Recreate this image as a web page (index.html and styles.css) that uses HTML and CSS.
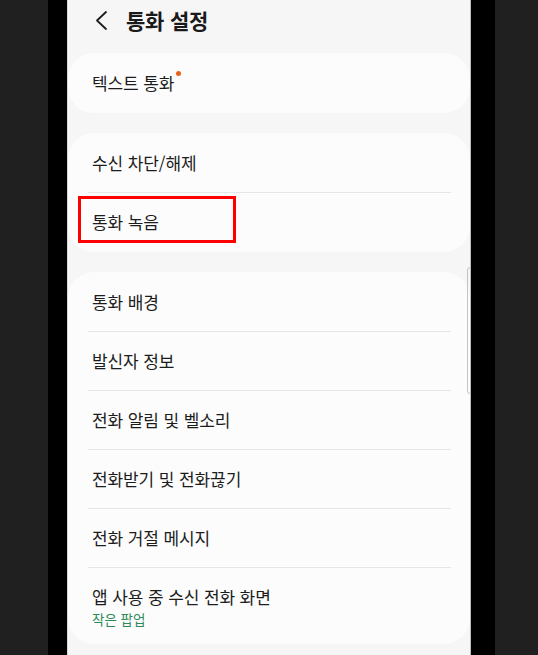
FILE: index.html
```html
<!DOCTYPE html>
<html lang="ko">
<head>
<meta charset="utf-8">
<title>통화 설정</title>
<link rel="stylesheet" href="styles.css">
</head>
<body>
<div class="frame">
  <div class="side side-left"></div>
  <div class="bezel bezel-left"></div>
  <div class="screen">
    <header class="header">
      <svg class="back" width="14" height="22" viewBox="0 0 14 22" aria-hidden="true">
        <polyline points="11,2 2,10.5 11,19" fill="none" stroke="#1c1c1c" stroke-width="1.8" stroke-linecap="round" stroke-linejoin="round"/>
      </svg>
      <h1 class="title">통화 설정</h1>
    </header>
    <main class="cards">
      <section class="card">
        <div class="row"><span class="label">텍스트 통화<span class="dot"></span></span></div>
      </section>
      <section class="card">
        <div class="row"><span class="label">수신 차단/해제</span></div>
        <div class="divider"></div>
        <div class="row row-marked"><span class="label">통화 녹음</span><span class="mark"></span></div>
      </section>
      <section class="card">
        <div class="row"><span class="label">통화 배경</span></div>
        <div class="divider"></div>
        <div class="row"><span class="label">발신자 정보</span></div>
        <div class="divider"></div>
        <div class="row"><span class="label">전화 알림 및 벨소리</span></div>
        <div class="divider"></div>
        <div class="row"><span class="label">전화받기 및 전화끊기</span></div>
        <div class="divider"></div>
        <div class="row"><span class="label">전화 거절 메시지</span></div>
        <div class="divider"></div>
        <div class="row row-tall">
          <span class="label">앱 사용 중 수신 전화 화면</span>
          <span class="sub">작은 팝업</span>
        </div>
      </section>
    </main>
    <div class="scrollbar"></div>
  </div>
  <div class="bezel bezel-right"></div>
  <div class="side side-right"></div>
</div>
</body>
</html>
```

FILE: styles.css
```css
html, body {
  margin: 0;
  padding: 0;
  height: 655px;
  overflow: hidden;
  background: #1f1f1f;
  font-family: "Noto Sans CJK KR", "Noto Sans", sans-serif;
}

.frame {
  display: flex;
  height: 655px;
}

.side {
  background: #202020;
}
.side-left { width: 48px; }
.side-right { flex: 1; }

.bezel {
  background: #000;
}
.bezel-left { width: 19px; }
.bezel-right { width: 24px; }

.screen {
  position: relative;
  width: 404px;
  height: 655px;
  background: #f6f6f6;
  overflow: hidden;
  border-left: 1px solid #d8d8d8;
  border-right: 1px solid #bdbdbd;
  box-sizing: border-box;
}

.header {
  height: 53px;
  display: flex;
  align-items: flex-start;
  padding: 6px 0 0 27px;
  box-sizing: border-box;
}

.back {
  margin-top: 4px;
}

.title {
  margin: 0 0 0 17px;
  font-size: 21px;
  line-height: 28px;
  font-weight: 700;
  color: #1a1a1a;
  letter-spacing: -0.2px;
}

.cards {
  display: flex;
  flex-direction: column;
  gap: 20px;
}

.card {
  background: #fcfcfd;
  border-radius: 26px;
  padding: 1px 0;
}

.row {
  position: relative;
  height: 58px;
  display: flex;
  flex-direction: column;
  justify-content: center;
  padding-left: 24px;
}

.row-tall {
  height: 75px;
  padding-top: 2px;
  box-sizing: border-box;
}

.label {
  font-size: 17px;
  line-height: 24px;
  color: #1c1c1c;
  letter-spacing: -0.1px;
}

.sub {
  font-size: 13.5px;
  line-height: 19px;
  color: #2f8a5a;
  margin-top: 1px;
}

.dot {
  display: inline-block;
  width: 5px;
  height: 5px;
  border-radius: 50%;
  background: #e8621c;
  vertical-align: top;
  margin: 0 0 0 2px;
}

.divider {
  height: 1px;
  background: #e6e6e6;
  margin: 0 19px 0 20px;
}

.mark {
  position: absolute;
  left: 10px;
  top: 3px;
  width: 158px;
  height: 47px;
  border: 3px solid #ff0000;
  box-sizing: border-box;
}

.scrollbar {
  position: absolute;
  right: -3px;
  top: 267px;
  width: 6px;
  height: 127px;
  border: 1px solid #c4c4c4;
  border-radius: 4px;
  box-sizing: border-box;
}
```
